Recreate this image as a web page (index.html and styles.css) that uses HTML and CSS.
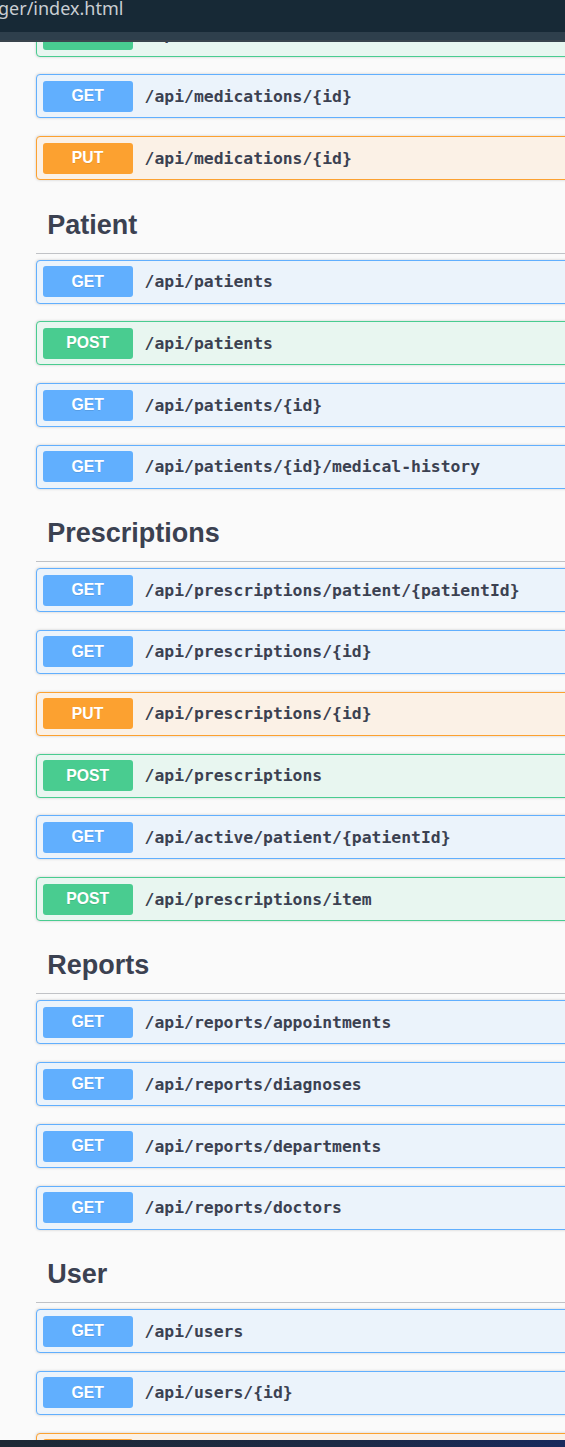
FILE: index.html
```html
<!DOCTYPE html>
<html lang="en">
<head>
<meta charset="utf-8">
<title>Swagger UI</title>
<link rel="stylesheet" href="styles.css">
</head>
<body>
<div class="chrome">
  <div class="chrome-bar"><span class="url">ger/index.html</span></div>
  <div class="chrome-strip"></div>
  <div class="chrome-line"></div>
</div>
<div class="viewport">
  <div class="content">
    <section class="tag-section">
      <div class="opblock post"><span class="method">POST</span><span class="path">/api/medications</span></div>
      <div class="opblock get"><span class="method">GET</span><span class="path">/api/medications/{id}</span></div>
      <div class="opblock put"><span class="method">PUT</span><span class="path">/api/medications/{id}</span></div>
    </section>
    <section class="tag-section">
      <h3 class="tag">Patient</h3>
      <div class="opblock get"><span class="method">GET</span><span class="path">/api/patients</span></div>
      <div class="opblock post"><span class="method">POST</span><span class="path">/api/patients</span></div>
      <div class="opblock get"><span class="method">GET</span><span class="path">/api/patients/{id}</span></div>
      <div class="opblock get"><span class="method">GET</span><span class="path">/api/patients/{id}/medical-history</span></div>
    </section>
    <section class="tag-section">
      <h3 class="tag">Prescriptions</h3>
      <div class="opblock get"><span class="method">GET</span><span class="path">/api/prescriptions/patient/{patientId}</span></div>
      <div class="opblock get"><span class="method">GET</span><span class="path">/api/prescriptions/{id}</span></div>
      <div class="opblock put"><span class="method">PUT</span><span class="path">/api/prescriptions/{id}</span></div>
      <div class="opblock post"><span class="method">POST</span><span class="path">/api/prescriptions</span></div>
      <div class="opblock get"><span class="method">GET</span><span class="path">/api/active/patient/{patientId}</span></div>
      <div class="opblock post"><span class="method">POST</span><span class="path">/api/prescriptions/item</span></div>
    </section>
    <section class="tag-section">
      <h3 class="tag">Reports</h3>
      <div class="opblock get"><span class="method">GET</span><span class="path">/api/reports/appointments</span></div>
      <div class="opblock get"><span class="method">GET</span><span class="path">/api/reports/diagnoses</span></div>
      <div class="opblock get"><span class="method">GET</span><span class="path">/api/reports/departments</span></div>
      <div class="opblock get"><span class="method">GET</span><span class="path">/api/reports/doctors</span></div>
    </section>
    <section class="tag-section">
      <h3 class="tag">User</h3>
      <div class="opblock get"><span class="method">GET</span><span class="path">/api/users</span></div>
      <div class="opblock get"><span class="method">GET</span><span class="path">/api/users/{id}</span></div>
      <div class="opblock put"><span class="method">PUT</span><span class="path">/api/users/{id}</span></div>
    </section>
  </div>
</div>
<div class="taskbar"></div>
</body>
</html>
```
FILE: styles.css
```css
html, body {
  margin: 0;
  padding: 0;
}
body {
  width: 565px;
  height: 1447px;
  overflow: hidden;
  background: #fafafa;
  font-family: "Liberation Sans", Arial, sans-serif;
  color: #3b4151;
}
.chrome {
  height: 42px;
  display: flex;
  flex-direction: column;
}
.chrome-bar {
  height: 32px;
  background: #172936;
  overflow: hidden;
}
.url {
  display: block;
  margin: -4px 0 0 -2px;
  font-family: "Noto Sans", "Open Sans", sans-serif;
  font-size: 18px;
  line-height: 24px;
  color: #c9ced3;
}
.chrome-strip {
  height: 8px;
  background: #2e3f4c;
}
.chrome-line {
  height: 2px;
  background: #3a444d;
}
.viewport {
  height: 1398px;
  overflow: hidden;
}
.content {
  width: 640px;
  margin-top: -29.4px;
  padding-left: 36px;
}
.tag {
  margin: 0 0 6px;
  padding: 10.5px 20px 10.5px 11.25px;
  font-size: 27px;
  line-height: 33.5px;
  font-weight: 700;
  color: #3b4151;
  border-bottom: 1px solid rgba(59, 65, 81, 0.3);
}
.opblock {
  box-sizing: border-box;
  height: 44px;
  margin-bottom: 17.8px;
  padding: 0 5.6px;
  display: flex;
  align-items: center;
  border: 1px solid;
  border-radius: 4px;
  box-shadow: 0 0 3px rgba(0, 0, 0, 0.19);
}
.method {
  box-sizing: border-box;
  width: 90px;
  height: 31px;
  border-radius: 3px;
  display: flex;
  align-items: center;
  justify-content: center;
  font-family: "Liberation Sans", Arial, sans-serif;
  font-weight: 700;
  font-size: 15.75px;
  color: #fff;
  text-shadow: 0 1px 0 rgba(0, 0, 0, 0.1);
}
.path {
  padding-left: 12px;
  font-family: "DejaVu Sans Mono", "Liberation Mono", monospace;
  font-weight: 700;
  font-size: 16.4px;
  color: #3b4151;
  white-space: nowrap;
}
.get {
  border-color: #61affe;
  background: #ebf3fb;
}
.get .method { background: #61affe; }
.post {
  border-color: #49cc90;
  background: #e8f6f0;
}
.post .method { background: #49cc90; }
.put {
  border-color: #fca130;
  background: #fbf1e6;
}
.put .method { background: #fca130; }
.taskbar {
  height: 7px;
  background: linear-gradient(90deg, #1e2935 0%, #1d2a45 60%, #18295c 100%);
}
```
